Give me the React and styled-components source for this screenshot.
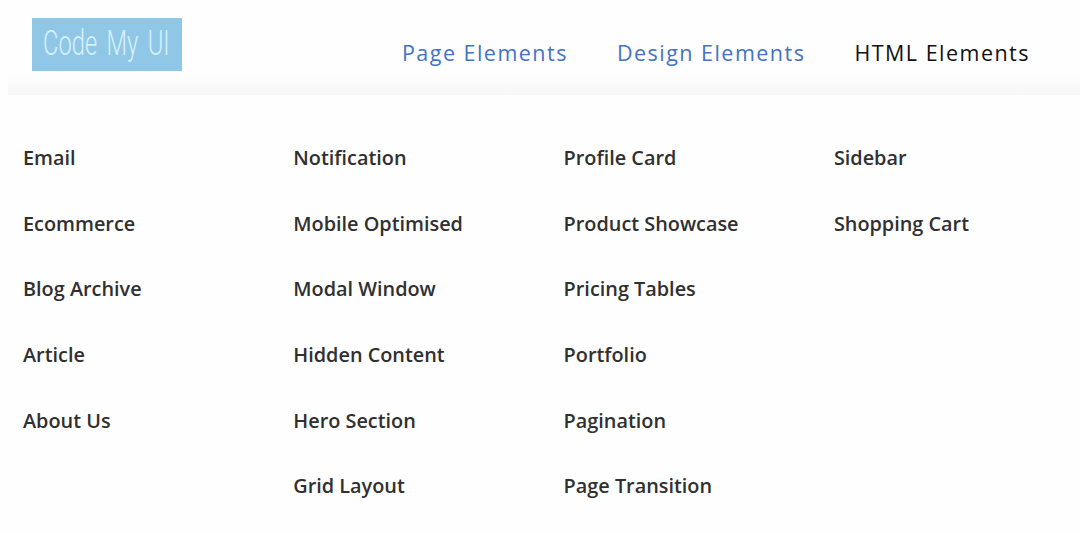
import React from "react";
import styled, { createGlobalStyle } from "styled-components";

const GlobalStyle = createGlobalStyle`
  body {
    margin: 0;
    background: #fefefe;
    font-family: "Open Sans", sans-serif;
    overflow: hidden;
  }
`;

const Site = styled.div`
  height: 533px;
  background: #fefefe;
`;

const Header = styled.header`
  box-sizing: border-box;
  display: flex;
  justify-content: space-between;
  height: 95px;
  margin-left: 8px;
  padding: 18px 50px 0 24px;
  background: linear-gradient(to bottom, #fefefe 74px, #f7f7f7 95px);
`;

const Logo = styled.svg`
  width: 150px;
  height: 52.5px;
  background: #90c7e6;
  font-family: Roboto, sans-serif;
  font-size: 27px;
  font-weight: 300;
  word-spacing: 4px;
  fill: #d5f1ff;
`;

const Nav = styled.nav`
  display: flex;
  gap: 49px;
  padding-top: 20px;
`;

const NavLink = styled.a`
  font-size: 21.5px;
  line-height: 30px;
  letter-spacing: 1.48px;
  white-space: nowrap;
  color: ${(props) => (props.$active ? "#111111" : "#4472c4")};
`;

const Menu = styled.div`
  display: grid;
  grid-template-columns: repeat(4, 270.3px);
  padding: 30px 0 0 23px;
`;

const MenuItem = styled.a`
  display: block;
  height: 65.7px;
  font-size: 19.85px;
  font-weight: 600;
  line-height: 65.7px;
  white-space: nowrap;
  color: #303030;
`;

const navLinks = ["Page Elements", "Design Elements", "HTML Elements"];

const columns = [
  ["Email", "Ecommerce", "Blog Archive", "Article", "About Us"],
  [
    "Notification",
    "Mobile Optimised",
    "Modal Window",
    "Hidden Content",
    "Hero Section",
    "Grid Layout",
  ],
  [
    "Profile Card",
    "Product Showcase",
    "Pricing Tables",
    "Portfolio",
    "Pagination",
    "Page Transition",
  ],
  ["Sidebar", "Shopping Cart"],
];

const App = () => {
  return (
    <Site>
      <GlobalStyle />
      <Header>
        <Logo viewBox="0 0 150 52.5">
          <text transform="translate(11 37) scale(0.88 1.28)">Code My UI</text>
        </Logo>
        <Nav>
          {navLinks.map((link) => (
            <NavLink key={link} $active={link === "HTML Elements"}>
              {link}
            </NavLink>
          ))}
        </Nav>
      </Header>
      <Menu>
        {columns.map((items) => (
          <div key={items[0]}>
            {items.map((item) => (
              <MenuItem key={item}>{item}</MenuItem>
            ))}
          </div>
        ))}
      </Menu>
    </Site>
  );
};

export default App;
